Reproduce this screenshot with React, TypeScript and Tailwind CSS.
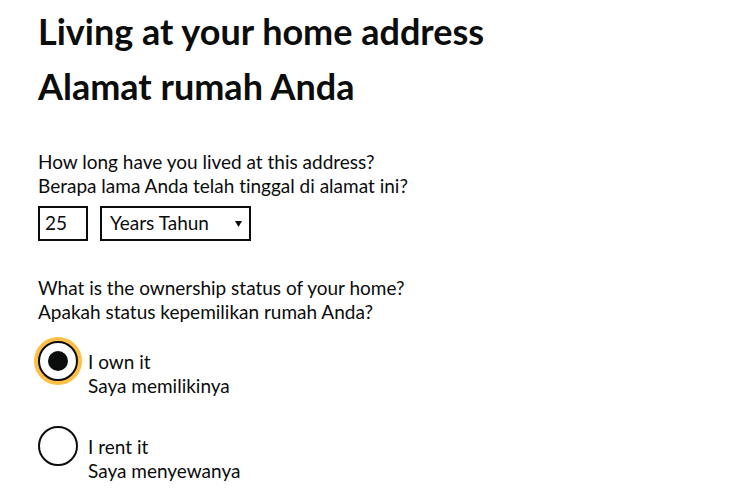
import React from "react";

function Radio({ checked, focused, line1, line2 }: { checked?: boolean; focused?: boolean; line1: string; line2: string }) {
  return (
    <div className="flex items-start">
      <div
        className={
          focused
            ? "w-[40px] h-[40px] rounded-full border-2 border-[#0b0c0c] bg-white flex items-center justify-center shrink-0 shadow-[0_0_0_4px_#ffbf47]"
            : "w-[40px] h-[40px] rounded-full border-2 border-[#0b0c0c] bg-white flex items-center justify-center shrink-0"
        }
      >
        {checked ? <div className="w-[20px] h-[20px] rounded-full bg-[#0b0c0c]" /> : null}
      </div>
      <div className="pl-[10px] pt-[9px] text-[19px] leading-[24px]">
        <div>{line1}</div>
        <div>{line2}</div>
      </div>
    </div>
  );
}

export default function App() {
  return (
    <div
      className="min-h-[499px] bg-white px-[38px] text-[#0b0c0c] [font-variant-ligatures:none]"
      style={{ fontFamily: "Lato, 'Liberation Sans', sans-serif" }}
    >
      <h1 className="pt-[11px] text-[36px] font-bold leading-[40px]">Living at your home address</h1>
      <h1 className="mt-[15px] text-[36px] font-bold leading-[40px]">Alamat rumah Anda</h1>

      <div className="mt-[44px] text-[19px] leading-[24px]">
        <div>How long have you lived at this address?</div>
        <div>Berapa lama Anda telah tinggal di alamat ini?</div>
      </div>
      <div className="mt-[8px] flex gap-[12px]">
        <div className="w-[50px] h-[35px] border-2 border-[#0b0c0c] px-[5px] text-[19px] leading-[29px]">25</div>
        <div className="w-[151px] h-[35px] border-2 border-[#0b0c0c] pl-[8px] pr-[7px] flex items-center justify-between text-[19px]">
          <span>Years Tahun</span>
          <svg width="7" height="6" viewBox="0 0 7 6" className="mt-[1px]">
            <polygon points="0,0 7,0 3.5,6" fill="#0b0c0c" />
          </svg>
        </div>
      </div>

      <div className="mt-[35px] text-[19px] leading-[24px]">
        <div>What is the ownership status of your home?</div>
        <div>Apakah status kepemilikan rumah Anda?</div>
      </div>

      <div className="mt-[17px] flex flex-col gap-[28px]">
        <Radio checked focused line1="I own it" line2="Saya memilikinya" />
        <Radio line1="I rent it" line2="Saya menyewanya" />
      </div>
    </div>
  );
}
